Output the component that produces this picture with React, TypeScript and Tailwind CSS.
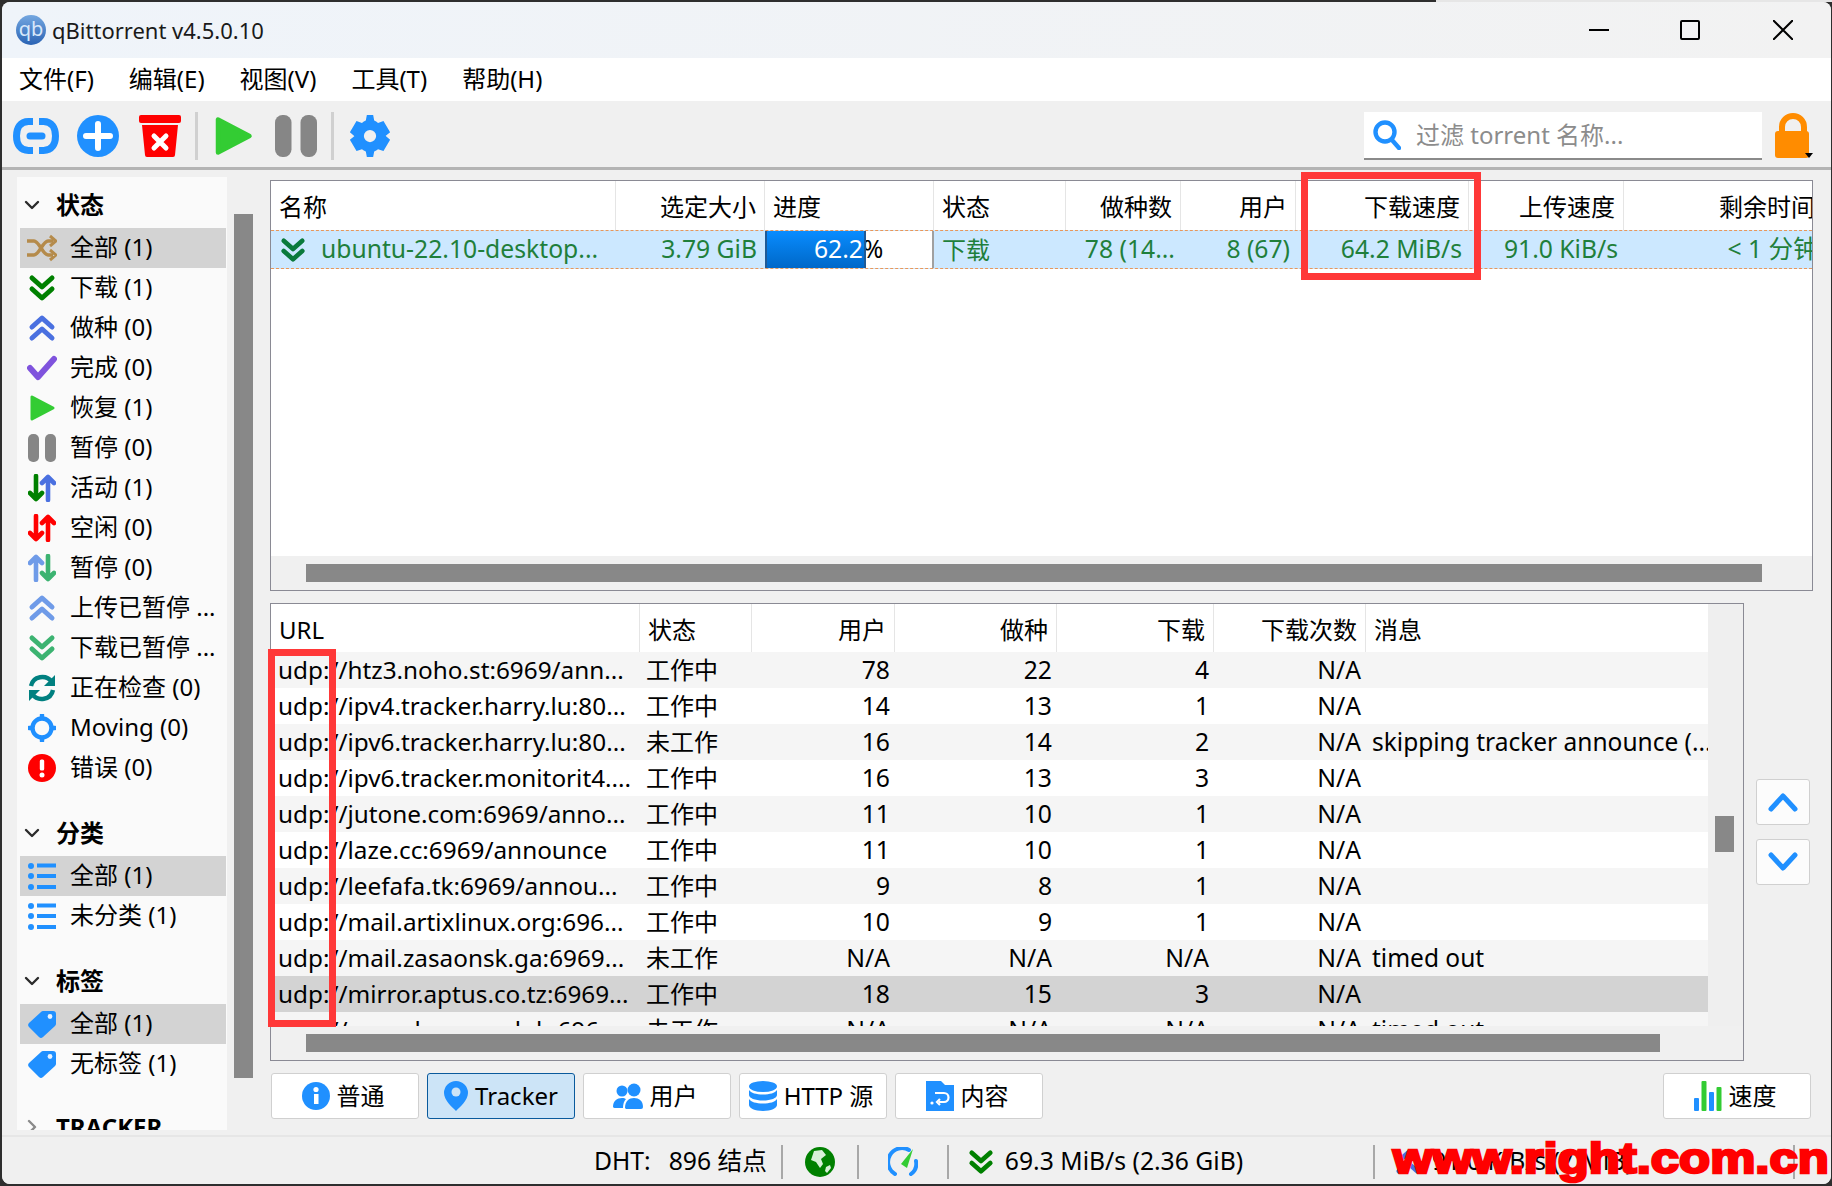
import type { ReactNode } from "react";

type IconProps = { c?: string; s?: number };

const BLUE = "#2090ff";

function Chevrons({ c = "#008000", s = 28, up = false }: IconProps & { up?: boolean }) {
  return (
    <svg width={s} height={s} viewBox="0 0 28 28" fill="none" stroke={c} strokeWidth="5" strokeLinecap="round" strokeLinejoin="round">
      {up ? (
        <>
          <path d="M4 13 14 4l10 9" />
          <path d="M4 24l10-9 10 9" />
        </>
      ) : (
        <>
          <path d="M4 4l10 9 10-9" />
          <path d="M4 15l10 9 10-9" />
        </>
      )}
    </svg>
  );
}

function Shuffle() {
  return (
    <svg width="30" height="28" viewBox="0 0 30 28" fill="none" stroke="#b58b4b" strokeWidth="3.4">
      <path d="M0 7h7c5 0 9 14 14 14h5" />
      <path d="M0 21h7c5 0 9-14 14-14h5" />
      <path d="M23 2l6 5-6 5M23 16l6 5-6 5" strokeWidth="3" />
    </svg>
  );
}

function Check() {
  return (
    <svg width="30" height="28" viewBox="0 0 30 28" fill="none" stroke="#7f53dd" strokeWidth="6" strokeLinecap="round" strokeLinejoin="round">
      <path d="M3 14l8 9L27 5" />
    </svg>
  );
}

function Play({ s = 28 }: IconProps) {
  return (
    <svg width={s} height={s} viewBox="0 0 28 28">
      <path d="M4 3v22l21-11z" fill="#33cc33" stroke="#33cc33" strokeWidth="3" strokeLinejoin="round" />
    </svg>
  );
}

function Pause({ s = 28 }: IconProps) {
  return (
    <svg width={s} height={s} viewBox="0 0 28 28" fill="#868686">
      <rect x="0" y="0" width="11" height="28" rx="5" />
      <rect x="17" y="0" width="11" height="28" rx="5" />
    </svg>
  );
}

function UpDown({ a, b, flip = false }: { a: string; b: string; flip?: boolean }) {
  return (
    <svg width="28" height="28" viewBox="0 0 28 28" fill="none" strokeWidth="4.6" strokeLinecap="round" strokeLinejoin="round">
      {flip ? (
        <>
          <path d="M8 26V3M2 9l6-6 6 6" stroke={a} />
          <path d="M20 2v23M14 19l6 6 6-6" stroke={b} />
        </>
      ) : (
        <>
          <path d="M8 2v23M2 19l6 6 6-6" stroke={a} />
          <path d="M20 26V3M14 9l6-6 6 6" stroke={b} />
        </>
      )}
    </svg>
  );
}

function Sync() {
  return (
    <svg width="28" height="28" viewBox="0 0 28 28" fill="none" stroke="#008080" strokeWidth="4.4">
      <path d="M3 12C5 2 18 0 24 8" />
      <path d="M25 16C23 26 10 28 4 20" />
      <path d="M27 1v11H16z" fill="#008080" stroke="none" />
      <path d="M1 27V16h11z" fill="#008080" stroke="none" />
    </svg>
  );
}

function Moving() {
  return (
    <svg width="28" height="28" viewBox="0 0 28 28" fill="none" stroke={BLUE} strokeWidth="4.4" strokeLinecap="round">
      <circle cx="14" cy="14" r="9.5" />
      <path d="M14 1v3M14 24v3M1 14h3M24 14h3" />
    </svg>
  );
}

function ErrorIcon() {
  return (
    <svg width="28" height="28" viewBox="0 0 28 28">
      <circle cx="14" cy="14" r="14" fill="#ff0000" />
      <rect x="11.8" y="5.5" width="4.4" height="11" rx="1.6" fill="#fff" />
      <circle cx="14" cy="21" r="2.5" fill="#fff" />
    </svg>
  );
}

function ListIcon() {
  return (
    <svg width="28" height="28" viewBox="0 0 28 28" fill={BLUE}>
      <circle cx="3" cy="4" r="3" />
      <circle cx="3" cy="14" r="3" />
      <circle cx="3" cy="25" r="3" />
      <rect x="9" y="1.5" width="19" height="4" />
      <rect x="9" y="12" width="19" height="4" />
      <rect x="9" y="23" width="19" height="4" />
    </svg>
  );
}

function TagIcon() {
  return (
    <svg width="28" height="28" viewBox="0 0 28 28">
      <path d="M15 1h10a3 3 0 0 1 3 3v10a3 3 0 0 1-1 2L15 27a3 3 0 0 1-4 0L1 17a3 3 0 0 1 0-4L13 2a3 3 0 0 1 2-1z" fill={BLUE} />
      <circle cx="22" cy="6.5" r="2.4" fill="#e8f3ff" />
    </svg>
  );
}

function Caret({ open = true }: { open?: boolean }) {
  return (
    <svg width="16" height="16" viewBox="0 0 16 16" fill="none" stroke={open ? "#2b2b2b" : "#8a8a8a"} strokeWidth="2.4" strokeLinecap="round" strokeLinejoin="round">
      {open ? <path d="M2 5l6 6 6-6" /> : <path d="M5 2l6 6-6 6" />}
    </svg>
  );
}

function SideHead({ label, open = true }: { label: string; open?: boolean }) {
  return (
    <div className="flex h-[40px] items-center gap-[16px] pb-[6px] pl-[7px]">
      <Caret open={open} />
      <span className="font-bold">{label}</span>
    </div>
  );
}

function SideRow({ icon, label, active = false }: { icon: ReactNode; label: string; active?: boolean }) {
  return (
    <div className={`ml-[3px] mr-[1px] flex h-[40px] items-center ${active ? "bg-[#d3d3d3]" : ""}`}>
      <div className="flex w-[50px] justify-center pr-[6px]">{icon}</div>
      <span className="whitespace-nowrap pb-[2px]">{label}</span>
    </div>
  );
}

function TabButton({ icon, label, active = false }: { icon: ReactNode; label: string; active?: boolean }) {
  return (
    <div
      className={`flex h-[46px] w-[148px] items-center justify-center gap-[7px] rounded-[3px] border ${
        active ? "border-[#0a5a9c] bg-[#cce4f7]" : "border-[#d0d0d0] bg-white pr-[4px]"
      }`}
    >
      {icon}
      <span className="whitespace-nowrap">{label}</span>
    </div>
  );
}

const trackers = [
  ["udp://htz3.noho.st:6969/ann...", "工作中", "78", "22", "4", "N/A", ""],
  ["udp://ipv4.tracker.harry.lu:80...", "工作中", "14", "13", "1", "N/A", ""],
  ["udp://ipv6.tracker.harry.lu:80...", "未工作", "16", "14", "2", "N/A", "skipping tracker announce (..."],
  ["udp://ipv6.tracker.monitorit4....", "工作中", "16", "13", "3", "N/A", ""],
  ["udp://jutone.com:6969/anno...", "工作中", "11", "10", "1", "N/A", ""],
  ["udp://laze.cc:6969/announce", "工作中", "11", "10", "1", "N/A", ""],
  ["udp://leefafa.tk:6969/annou...", "工作中", "9", "8", "1", "N/A", ""],
  ["udp://mail.artixlinux.org:696...", "工作中", "10", "9", "1", "N/A", ""],
  ["udp://mail.zasaonsk.ga:6969...", "未工作", "N/A", "N/A", "N/A", "N/A", "timed out"],
  ["udp://mirror.aptus.co.tz:6969...", "工作中", "18", "15", "3", "N/A", ""],
  ["udp://moonburrow.club:696...", "未工作", "N/A", "N/A", "N/A", "N/A", "timed out"],
];

const topCols = "grid-cols-[345px_149px_169px_132px_115px_115px_173px_155px_200px]";
const botCols = "grid-cols-[369px_112px_143px_162px_157px_152px_343px]";

function TopHead({ label, right = true }: { label: string; right?: boolean }) {
  return (
    <div className={`flex items-center overflow-hidden whitespace-nowrap border-r border-[#e5e5e5] px-[8px] pt-[3px] ${right ? "justify-end" : ""}`}>
      {label}
    </div>
  );
}

function Cell({ children, right = true, pl = "pl-[8px]", pr = "pr-[6px]" }: { children: ReactNode; right?: boolean; pl?: string; pr?: string }) {
  return (
    <div className={`flex items-center overflow-hidden whitespace-nowrap text-[24.7px] ${right ? `justify-end ${pr}` : pl}`}>{children}</div>
  );
}

function HScroll({ left, width }: { left: string; width: string }) {
  return (
    <div className={`flex h-[34px] shrink-0 items-center bg-[#f0f0f0] ${left}`}>
      <div className={`h-[18px] ${width} bg-[#888888]`} />
    </div>
  );
}

function Sep() {
  return <div className="h-[48px] w-[3px] bg-[#d0d0d0]" />;
}

function StatusSep() {
  return <div className="h-[34px] w-[2px] shrink-0 bg-[#a8a8a8]" />;
}

export default function App() {
  return (
    <div className="relative h-[1186px] w-[1832px] overflow-hidden bg-[#2e2e2e] p-[2px] pr-[1px] font-['Noto_Sans','Noto_Sans_CJK_SC',sans-serif] text-[24px] leading-none text-black">
      <div className="absolute left-[1436px] top-0 h-[2px] w-[396px] bg-[#e6e6e6]" />
      <div className="relative flex h-full flex-col overflow-hidden rounded-[8px] bg-[#f0f0f0]">
        {/* title bar */}
        <div className="flex h-[56px] shrink-0 items-center bg-gradient-to-r from-[#eff4fa] to-[#f2f2f2] pl-[14px]">
          <div className="flex h-[30px] w-[30px] items-center justify-center rounded-full bg-gradient-to-b from-[#74a7e0] to-[#2a63b4] pb-[2px] text-[20px] text-[#d8e8fa]">
            qb
          </div>
          <span className="ml-[6px] text-[22px] text-[#1a1a1a]">qBittorrent v4.5.0.10</span>
          <div className="ml-auto flex items-center pr-[38px]">
            <div className="h-[2px] w-[20px] bg-black" />
            <div className="ml-[71px] h-[20px] w-[20px] rounded-[2px] border-2 border-black" />
            <svg className="ml-[73px]" width="20" height="20" viewBox="0 0 20 20" stroke="#000" strokeWidth="2">
              <path d="M0 0l20 20M20 0L0 20" />
            </svg>
          </div>
        </div>

        {/* menu */}
        <div className="flex h-[43px] shrink-0 items-center gap-[35px] bg-white pb-[1px] pl-[17px]">
          <span>文件(F)</span>
          <span>编辑(E)</span>
          <span>视图(V)</span>
          <span>工具(T)</span>
          <span>帮助(H)</span>
        </div>

        {/* toolbar */}
        <div className="mt-[2px] flex h-[67px] shrink-0 items-center border-b-[3px] border-[#b4b4b4] bg-[#f0f0f0] pl-[11px] pt-[1px]">
          <svg width="46" height="36" viewBox="0 0 46 36" fill="none" stroke={BLUE} strokeWidth="7">
            <path d="M20 3.5h-4.5C7 3.5 3.5 10 3.5 18S7 32.500 15.500 32.500H20M26 3.500h4.500C39 3.500 42.500 10 42.500 18S39 32.500 30.500 32.500H26" />
            <path d="M17 18h12" strokeLinecap="round" />
          </svg>
          <svg className="ml-[18px]" width="42" height="42" viewBox="0 0 42 42">
            <circle cx="21" cy="21" r="21" fill={BLUE} />
            <path d="M21 9v24M9 21h24" stroke="#fff" strokeWidth="6" strokeLinecap="round" />
          </svg>
          <svg className="ml-[20px]" width="42" height="42" viewBox="0 0 42 42">
            <rect x="0" y="0" width="42" height="8" rx="2" fill="#ff0000" />
            <path d="M3 10h36l-3 30a2 2 0 0 1-2 2H8a2 2 0 0 1-2-2z" fill="#ff0000" />
            <path d="M15 21l12 12M27 21L15 33" stroke="#fff" strokeWidth="5" strokeLinecap="round" />
          </svg>
          <div className="ml-[14px]">
            <Sep />
          </div>
          <div className="ml-[14px]">
            <Play s={42} />
          </div>
          <div className="ml-[21px]">
            <Pause s={42} />
          </div>
          <div className="ml-[14px]">
            <Sep />
          </div>
          <svg className="ml-[15px]" width="42" height="42" viewBox="0 0 24 24" fill={BLUE}>
            <path
              d="M13.8 0h-3.6l-.6 3.2a9 9 0 0 0-2.2 1.3L4.3 3.4.5 9.9 3 12a9 9 0 0 0 0 .1L.5 14.1l3.8 6.5 3.1-1.1a9 9 0 0 0 2.2 1.3l.6 3.2h3.6l.6-3.2a9 9 0 0 0 2.2-1.3l3.1 1.1 3.8-6.5L21 12a9 9 0 0 0 0-.1l2.5-2-3.8-6.5-3.1 1.1a9 9 0 0 0-2.2-1.3zM12 8.5a3.5 3.5 0 1 1 0 7 3.5 3.5 0 0 1 0-7z"
              fillRule="evenodd"
            />
          </svg>
          <div className="ml-auto flex h-[48px] w-[398px] items-center gap-[15px] border-b-2 border-[#8a8a8a] bg-white pl-[9px] text-[#8c8c8c]">
            <svg width="28" height="30" viewBox="0 0 28 30" fill="none" stroke={BLUE} strokeWidth="4.4" strokeLinecap="round">
              <circle cx="12" cy="12" r="9.5" />
              <path d="M19 20l7 8" />
            </svg>
            <span>过滤 torrent 名称...</span>
          </div>
          <div className="relative ml-[13px] mr-[20px] h-[46px] w-[36px]">
            <svg width="36" height="46" viewBox="0 0 36 46">
              <path d="M7 20v-6a11 11 0 0 1 22 0v6" fill="none" stroke="#ff8c00" strokeWidth="6" />
              <rect x="0" y="18" width="34" height="27" rx="3" fill="#ff8c00" />
            </svg>
            <div className="absolute bottom-[1px] right-[-2px] h-0 w-0 border-x-[4px] border-t-[5px] border-x-transparent border-t-black" />
          </div>
        </div>

        {/* body */}
        <div className="flex min-h-0 flex-1 pl-[15px] pr-[18px] pt-[7px]">
          {/* sidebar */}
          <div className="h-[953px] w-[210px] shrink-0 overflow-hidden bg-[#fafafa] pt-[11px]">
            <SideHead label="状态" />
            <SideRow active icon={<Shuffle />} label="全部 (1)" />
            <SideRow icon={<Chevrons />} label="下载 (1)" />
            <SideRow icon={<Chevrons up c="#4a70e0" />} label="做种 (0)" />
            <SideRow icon={<Check />} label="完成 (0)" />
            <SideRow icon={<Play />} label="恢复 (1)" />
            <SideRow icon={<Pause />} label="暂停 (0)" />
            <SideRow icon={<UpDown a="#008000" b="#4a70e0" />} label="活动 (1)" />
            <SideRow icon={<UpDown a="#ff0000" b="#ff0000" />} label="空闲 (0)" />
            <SideRow icon={<UpDown flip a="#6f9be8" b="#3cb371" />} label="暂停 (0)" />
            <SideRow icon={<Chevrons up c="#6f9be8" />} label="上传已暂停 ..." />
            <SideRow icon={<Chevrons c="#3cb371" />} label="下载已暂停 ..." />
            <SideRow icon={<Sync />} label="正在检查 (0)" />
            <SideRow icon={<Moving />} label="Moving (0)" />
            <SideRow icon={<ErrorIcon />} label="错误 (0)" />
            <div className="h-[28px]" />
            <SideHead label="分类" />
            <SideRow active icon={<ListIcon />} label="全部 (1)" />
            <SideRow icon={<ListIcon />} label="未分类 (1)" />
            <div className="h-[28px]" />
            <SideHead label="标签" />
            <SideRow active icon={<TagIcon />} label="全部 (1)" />
            <SideRow icon={<TagIcon />} label="无标签 (1)" />
            <div className="h-[26px]" />
            <SideHead label="TRACKER" open={false} />
          </div>

          {/* sidebar scrollbar */}
          <div className="ml-[7px] mt-[37px] h-[864px] w-[19px] shrink-0 bg-[#888888]" />

          {/* main */}
          <div className="ml-[17px] mt-[3px] flex min-w-0 flex-1 flex-col">
            {/* torrent list */}
            <div className="flex h-[411px] shrink-0 flex-col overflow-hidden border border-[#8a8a94] bg-white">
              <div className={`grid h-[49px] shrink-0 ${topCols}`}>
                <TopHead label="名称" right={false} />
                <TopHead label="选定大小" />
                <TopHead label="进度" right={false} />
                <TopHead label="状态" right={false} />
                <TopHead label="做种数" />
                <TopHead label="用户" />
                <TopHead label="下载速度" />
                <TopHead label="上传速度" />
                <TopHead label="剩余时间" />
              </div>
              <div className={`grid h-[39px] shrink-0 border-y border-dashed border-[#e8975a] bg-[#cce8ff] text-[#1f7f3b] ${topCols}`}>
                <Cell right={false} pl="pl-[9px]">
                  <Chevrons s={26} c="#0a7a3c" />
                  <span className="ml-[15px]">ubuntu-22.10-desktop...</span>
                </Cell>
                <Cell pr="pr-[8px]">3.79 GiB</Cell>
                <div className="relative flex items-center justify-center border-r-2 border-[#a0a0a0] bg-white text-[24.7px] text-black">
                  <span>62.2%</span>
                  <div className="absolute inset-y-0 left-0 flex w-[101px] items-center overflow-hidden border-x-2 border-[#1f5a96] bg-gradient-to-b from-[#0a8cff] to-[#0068c8] text-white">
                    <span className="absolute left-[47px] whitespace-nowrap">62.2%</span>
                  </div>
                </div>
                <Cell right={false}>
                  <span className="text-[24px]">下载</span>
                </Cell>
                <Cell>78 (14...</Cell>
                <Cell>8 (67)</Cell>
                <Cell pr="pr-[7px]">64.2 MiB/s</Cell>
                <Cell>91.0 KiB/s</Cell>
                <Cell>&lt; 1 分钟</Cell>
              </div>
              <div className="flex-1" />
              <HScroll left="pl-[35px]" width="w-[1456px]" />
            </div>

            <div className="mt-[12px] flex min-h-0">
              {/* tracker list */}
              <div className="flex h-[458px] w-[1474px] shrink-0 flex-col overflow-hidden border border-[#8a8a94] bg-white">
                <div className="flex min-h-0 flex-1">
                  <div className="min-w-0 flex-1 overflow-hidden">
                    <div className={`grid h-[48px] ${botCols}`}>
                      <TopHead label="URL" right={false} />
                      <TopHead label="状态" right={false} />
                      <TopHead label="用户" />
                      <TopHead label="做种" />
                      <TopHead label="下载" />
                      <TopHead label="下载次数" />
                      <TopHead label="消息" right={false} />
                    </div>
                    {trackers.map((t, i) => (
                      <div key={i} className={`grid h-[36px] ${botCols} ${i === 9 ? "bg-[#d3d3d3]" : i % 2 === 0 ? "bg-[#f5f5f5]" : "bg-white"}`}>
                        <Cell right={false} pl="pl-[7px]">
                          <span className="text-[24.3px]">{t[0]}</span>
                        </Cell>
                        <Cell right={false} pl="pl-[6px]">
                          <span className="text-[24px]">{t[1]}</span>
                        </Cell>
                        <Cell pr="pr-[5px]">{t[2]}</Cell>
                        <Cell pr="pr-[5px]">{t[3]}</Cell>
                        <Cell pr="pr-[5px]">{t[4]}</Cell>
                        <Cell pr="pr-[5px]">{t[5]}</Cell>
                        <Cell right={false} pl="pl-[6px]">
                          <span className="text-[24.5px]">{t[6]}</span>
                        </Cell>
                      </div>
                    ))}
                  </div>
                  <div className="flex w-[35px] shrink-0 justify-center bg-[#efefef] pr-[3px] pt-[212px]">
                    <div className="h-[36px] w-[19px] bg-[#888888]" />
                  </div>
                </div>
                <HScroll left="pl-[35px]" width="w-[1354px]" />
              </div>

              {/* move buttons */}
              <div className="ml-[12px] flex flex-col gap-[14px] pt-[176px]">
                <div className="flex h-[46px] w-[54px] items-center justify-center rounded-[3px] border border-[#d0d0d0] bg-[#fcfcfc]">
                  <svg width="30" height="22" viewBox="0 0 30 22" fill="none" stroke={BLUE} strokeWidth="5" strokeLinecap="round" strokeLinejoin="round">
                    <path d="M3 18 15 5l12 13" />
                  </svg>
                </div>
                <div className="flex h-[46px] w-[54px] items-center justify-center rounded-[3px] border border-[#d0d0d0] bg-[#fcfcfc]">
                  <svg width="30" height="22" viewBox="0 0 30 22" fill="none" stroke={BLUE} strokeWidth="5" strokeLinecap="round" strokeLinejoin="round">
                    <path d="M3 4l12 13L27 4" />
                  </svg>
                </div>
              </div>
            </div>

            {/* tab buttons */}
            <div className="mt-[12px] flex gap-[8px] pl-[1px] pr-[2px]">
              <TabButton
                label="普通"
                icon={
                  <svg width="28" height="28" viewBox="0 0 28 28">
                    <circle cx="14" cy="14" r="14" fill={BLUE} />
                    <rect x="12" y="12" width="4.5" height="10" fill="#fff" />
                    <circle cx="14" cy="7.5" r="2.6" fill="#fff" />
                  </svg>
                }
              />
              <TabButton
                active
                label="Tracker"
                icon={
                  <svg width="24" height="30" viewBox="0 0 24 30">
                    <path d="M12 0a12 12 0 0 1 12 12c0 7-8 14-12 18C8 26 0 19 0 12A12 12 0 0 1 12 0z" fill={BLUE} />
                    <circle cx="12" cy="11" r="4.5" fill="#cce4f7" />
                  </svg>
                }
              />
              <TabButton
                label="用户"
                icon={
                  <svg width="30" height="26" viewBox="0 0 30 26" fill={BLUE}>
                    <circle cx="9" cy="8" r="5.5" />
                    <circle cx="21" cy="7" r="6.5" />
                    <path d="M0 24c0-6 4-9 9-9 2 0 3 .5 4 1-2 2-3 5-3 9H2a2 2 0 0 1-2-1z" />
                    <path d="M12 25c0-7 4-10 9-10s9 3 9 9a2 2 0 0 1-2 2H13z" />
                  </svg>
                }
              />
              <TabButton
                label="HTTP 源"
                icon={
                  <svg width="28" height="30" viewBox="0 0 28 30" fill={BLUE}>
                    <ellipse cx="14" cy="5.5" rx="14" ry="5.5" />
                    <path d="M0 9c2 3 7 4.5 14 4.5S26 12 28 9v5c0 3-6 5.5-14 5.5S0 17 0 14z" />
                    <path d="M0 18c2 3 7 4.5 14 4.5S26 21 28 18v6c0 3-6 6-14 6S0 27 0 24z" />
                  </svg>
                }
              />
              <TabButton
                label="内容"
                icon={
                  <svg width="28" height="30" viewBox="0 0 28 30">
                    <path d="M0 0h15l4 4h9v26H0z" fill={BLUE} />
                    <path d="M9 12h9a4 4 0 0 1 0 9h-5M14 18l-3 3 3 3" fill="none" stroke="#fff" strokeWidth="2.2" />
                    <circle cx="6" cy="22" r="1.6" fill="#fff" />
                  </svg>
                }
              />
              <div className="ml-auto">
                <TabButton
                  label="速度"
                  icon={
                    <svg width="28" height="30" viewBox="0 0 28 30">
                      <rect x="0" y="17" width="5" height="13" rx="1" fill={BLUE} />
                      <rect x="7.5" y="0" width="5" height="30" rx="1" fill="#33cc33" />
                      <rect x="15" y="11" width="5" height="19" rx="1" fill={BLUE} />
                      <rect x="22.5" y="6" width="5" height="24" rx="1" fill="#33cc33" />
                    </svg>
                  }
                />
              </div>
            </div>
          </div>
        </div>

        {/* status bar */}
        <div className="flex h-[49px] shrink-0 items-center border-t-2 border-[#e6e6e6] bg-[#f0f0f0] pl-[592px] pt-[2px] text-[24.7px]">
          <span className="whitespace-nowrap">DHT:</span>
          <span className="ml-[18px] whitespace-nowrap">896 结点</span>
          <div className="ml-[14px]">
            <StatusSep />
          </div>
          <svg className="ml-[22px]" width="30" height="30" viewBox="0 0 30 30">
            <circle cx="15" cy="15" r="15" fill="#008000" />
            <path d="M9 4l8-1 4 5-5 4 2 5-3 4-4-6-5-2zM21 20l4-2 1 3-4 5-2-2z" fill="#d8f0d8" />
          </svg>
          <div className="ml-[22px]">
            <StatusSep />
          </div>
          <svg className="ml-[29px]" width="30" height="30" viewBox="0 0 30 30" fill="none">
            <path d="M21 3A13 13 0 0 0 7 27M23 27a13 13 0 0 0 5-13" stroke={BLUE} strokeWidth="4" strokeLinecap="round" />
            <path d="M25 2 19 21l-6-4z" fill="#33cc33" />
          </svg>
          <div className="ml-[29px]">
            <StatusSep />
          </div>
          <div className="ml-[19px]">
            <Chevrons s={26} />
          </div>
          <span className="ml-[11px] whitespace-nowrap">69.3 MiB/s (2.36 GiB)</span>
          <div className="ml-[130px]">
            <StatusSep />
          </div>
          <div className="ml-[20px]">
            <Chevrons up s={26} c="#4a70e0" />
          </div>
          <span className="ml-[11px] whitespace-nowrap">91.0 KiB/s (7 MiB)</span>
          <div className="ml-auto mr-[36px]">
            <StatusSep />
          </div>
        </div>
      </div>

      {/* annotation boxes and watermark sit on top of the screenshot */}
      <div className="absolute left-[1301px] top-[172px] h-[108px] w-[180px] border-[7px] border-[#ff3838]" />
      <div className="absolute left-[268px] top-[649px] h-[378px] w-[68px] border-[7px] border-[#ff3838]" />
      <div className="absolute left-[1393px] top-[1138px] origin-left scale-x-[1.21] whitespace-nowrap font-['Liberation_Sans',sans-serif] text-[42px] font-bold text-[#ff0000] [-webkit-text-stroke:2.5px_#ff0000]">
        www.right.com.cn
      </div>
    </div>
  );
}
